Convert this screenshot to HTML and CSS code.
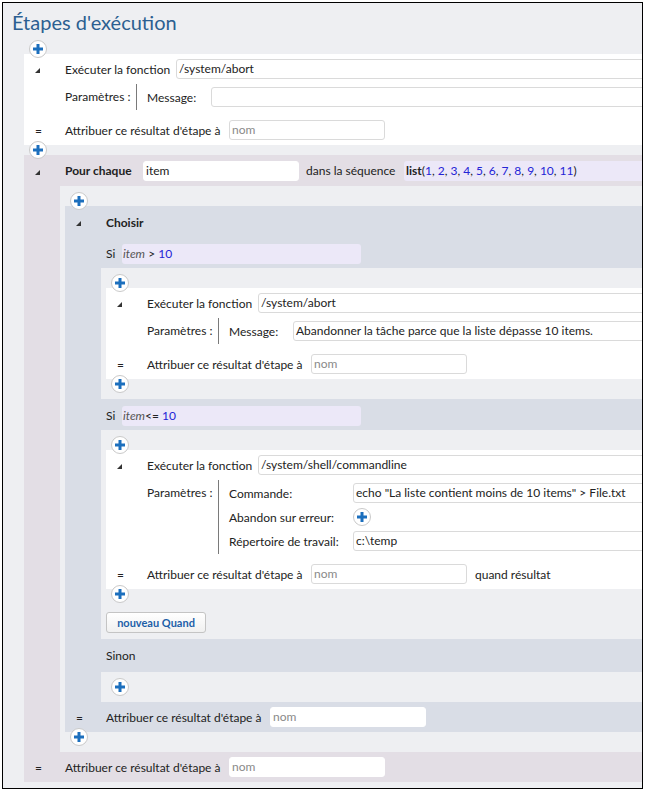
FILE: index.html
```html
<!DOCTYPE html>
<html lang="fr">
<head>
<meta charset="utf-8">
<title>Étapes d'exécution</title>
<link rel="stylesheet" href="styles.css">
</head>
<body>
<div class="frame">
  <h1 class="title">Étapes d'exécution</h1>
  <div class="seq top">
    <div class="add"><svg class="plus" viewBox="0 0 18 18" width="18" height="18"><circle cx="9" cy="9" r="8.5" fill="#fff" stroke="#c9c9c9"/><path d="M7.5 4h3v3.5h3.5v3h-3.5v3.5h-3v-3.5h-3.5v-3h3.5z" fill="#1c6fbd"/></svg></div>
    <div class="step">
      <div class="row">
        <span class="gutter"><span class="tri"></span></span>
        <span class="lbl l-exec">Exécuter la fonction</span>
        <span class="field f-long">/system/abort</span>
      </div>
      <div class="prow">
        <span class="gutter"></span>
        <span class="lbl l-par">Paramètres :</span>
        <div class="params p-msg">
          <span class="plbl">Message:</span><span class="field f-long"></span>
        </div>
      </div>
      <div class="row arow">
        <span class="gutter eq">=</span>
        <span class="lbl l-attr">Attribuer ce résultat d'étape à</span>
        <span class="field f-short ph">nom</span>
      </div>
    </div>
    <div class="add"><svg class="plus" viewBox="0 0 18 18" width="18" height="18"><circle cx="9" cy="9" r="8.5" fill="#fff" stroke="#c9c9c9"/><path d="M7.5 4h3v3.5h3.5v3h-3.5v3.5h-3v-3.5h-3.5v-3h3.5z" fill="#1c6fbd"/></svg></div>
    <div class="foreach">
      <div class="row fhead">
        <span class="gutter"><span class="tri"></span></span>
        <b class="lbl l-pour">Pour chaque</b>
        <span class="field f-short f-plain">item</span>
        <span class="lbl l-dans">dans la séquence</span>
        <span class="expr e-list"><b>list</b>(<span class="num">1</span>, <span class="num">2</span>, <span class="num">3</span>, <span class="num">4</span>, <span class="num">5</span>, <span class="num">6</span>, <span class="num">7</span>, <span class="num">8</span>, <span class="num">9</span>, <span class="num">10</span>, <span class="num">11</span>)</span>
      </div>
      <div class="fbody">
        <div class="add"><svg class="plus" viewBox="0 0 18 18" width="18" height="18"><circle cx="9" cy="9" r="8.5" fill="#fff" stroke="#c9c9c9"/><path d="M7.5 4h3v3.5h3.5v3h-3.5v3.5h-3v-3.5h-3.5v-3h3.5z" fill="#1c6fbd"/></svg></div>
        <div class="choose">
          <div class="row chead">
            <span class="gutter"><span class="tri"></span></span>
            <b class="lbl">Choisir</b>
          </div>
          <div class="cond">
            <span class="si">Si</span>
            <span class="expr e-cond"><i class="var">item</i> &gt; <span class="num">10</span></span>
          </div>
          <div class="cbody">
            <div class="add"><svg class="plus" viewBox="0 0 18 18" width="18" height="18"><circle cx="9" cy="9" r="8.5" fill="#fff" stroke="#c9c9c9"/><path d="M7.5 4h3v3.5h3.5v3h-3.5v3.5h-3v-3.5h-3.5v-3h3.5z" fill="#1c6fbd"/></svg></div>
            <div class="step">
              <div class="row">
                <span class="gutter"><span class="tri"></span></span>
                <span class="lbl l-exec">Exécuter la fonction</span>
                <span class="field f-long">/system/abort</span>
              </div>
              <div class="prow">
                <span class="gutter"></span>
                <span class="lbl l-par">Paramètres :</span>
                <div class="params p-msg">
                  <span class="plbl">Message:</span><span class="field f-long">Abandonner la tâche parce que la liste dépasse 10 items.</span>
                </div>
              </div>
              <div class="row arow">
                <span class="gutter eq">=</span>
                <span class="lbl l-attr">Attribuer ce résultat d'étape à</span>
                <span class="field f-short ph">nom</span>
              </div>
            </div>
            <div class="add"><svg class="plus" viewBox="0 0 18 18" width="18" height="18"><circle cx="9" cy="9" r="8.5" fill="#fff" stroke="#c9c9c9"/><path d="M7.5 4h3v3.5h3.5v3h-3.5v3.5h-3v-3.5h-3.5v-3h3.5z" fill="#1c6fbd"/></svg></div>
          </div>
          <div class="cond cond2">
            <span class="si">Si</span>
            <span class="expr e-cond"><i class="var">item</i>&lt;= <span class="num">10</span></span>
          </div>
          <div class="cbody cbody2">
            <div class="add"><svg class="plus" viewBox="0 0 18 18" width="18" height="18"><circle cx="9" cy="9" r="8.5" fill="#fff" stroke="#c9c9c9"/><path d="M7.5 4h3v3.5h3.5v3h-3.5v3.5h-3v-3.5h-3.5v-3h3.5z" fill="#1c6fbd"/></svg></div>
            <div class="step">
              <div class="row">
                <span class="gutter"><span class="tri"></span></span>
                <span class="lbl l-exec">Exécuter la fonction</span>
                <span class="field f-long">/system/shell/commandline</span>
              </div>
              <div class="prow">
                <span class="gutter"></span>
                <span class="lbl l-par">Paramètres :</span>
                <div class="params p-cmd">
                  <span class="plbl">Commande:</span><span class="field f-long">echo "La liste contient moins de 10 items" &gt; File.txt</span>
                  <span class="plbl">Abandon sur erreur:</span><span class="pval"><svg class="plus" viewBox="0 0 18 18" width="18" height="18"><circle cx="9" cy="9" r="8.5" fill="#fff" stroke="#c9c9c9"/><path d="M7.5 4h3v3.5h3.5v3h-3.5v3.5h-3v-3.5h-3.5v-3h3.5z" fill="#1c6fbd"/></svg></span>
                  <span class="plbl">Répertoire de travail:</span><span class="field f-long">c:\temp</span>
                </div>
              </div>
              <div class="row arow">
                <span class="gutter eq">=</span>
                <span class="lbl l-attr">Attribuer ce résultat d'étape à</span>
                <span class="field f-short ph">nom</span>
                <span class="lbl quand">quand résultat</span>
              </div>
            </div>
            <div class="add"><svg class="plus" viewBox="0 0 18 18" width="18" height="18"><circle cx="9" cy="9" r="8.5" fill="#fff" stroke="#c9c9c9"/><path d="M7.5 4h3v3.5h3.5v3h-3.5v3.5h-3v-3.5h-3.5v-3h3.5z" fill="#1c6fbd"/></svg></div>
            <div class="newwhen"><button class="btn" type="button">nouveau Quand</button></div>
          </div>
          <div class="sinon">Sinon</div>
          <div class="cbody">
            <div class="add"><svg class="plus" viewBox="0 0 18 18" width="18" height="18"><circle cx="9" cy="9" r="8.5" fill="#fff" stroke="#c9c9c9"/><path d="M7.5 4h3v3.5h3.5v3h-3.5v3.5h-3v-3.5h-3.5v-3h3.5z" fill="#1c6fbd"/></svg></div>
          </div>
          <div class="row carow">
            <span class="gutter eq">=</span>
            <span class="lbl l-attr">Attribuer ce résultat d'étape à</span>
            <span class="field f-short f-plain ph">nom</span>
          </div>
        </div>
        <div class="add"><svg class="plus" viewBox="0 0 18 18" width="18" height="18"><circle cx="9" cy="9" r="8.5" fill="#fff" stroke="#c9c9c9"/><path d="M7.5 4h3v3.5h3.5v3h-3.5v3.5h-3v-3.5h-3.5v-3h3.5z" fill="#1c6fbd"/></svg></div>
      </div>
      <div class="row farow">
        <span class="gutter eq">=</span>
        <span class="lbl l-attr">Attribuer ce résultat d'étape à</span>
        <span class="field f-short f-plain ph">nom</span>
      </div>
    </div>
  </div>
</div>
</body>
</html>
```
FILE: styles.css
```css
body {
  margin: 0;
  background: #fff;
}
.frame {
  margin: 2px 0 0 2px;
  width: 639px;
  height: 785px;
  border: 1px solid #000;
  overflow: hidden;
  background: #eeeff2;
  font-family: "Segoe UI", Lato, "Noto Sans", sans-serif;
  font-size: 12px;
  color: #222;
}
.title {
  margin: 0;
  height: 41px;
  box-sizing: border-box;
  padding: 6px 0 0 9px;
  font-size: 20px;
  font-weight: normal;
  line-height: 26px;
  color: #2c5f91;
}
.top {
  margin-left: 21px;
  width: 820px;
}
.add {
  height: 10px;
  display: flex;
  align-items: center;
  padding-left: 5px;
}
.plus {
  flex: none;
  display: block;
  position: relative;
  z-index: 1;
}
.step {
  background: #fff;
  padding: 5px 0;
}
.row {
  display: flex;
  align-items: center;
  height: 20px;
  white-space: nowrap;
}
.gutter {
  flex: none;
  width: 41px;
  box-sizing: border-box;
  padding-left: 11px;
  display: flex;
  align-items: center;
}
.tri {
  width: 0;
  height: 0;
  margin-top: 3px;
  border-left: 5px solid transparent;
  border-bottom: 5px solid #333;
}
.lbl {
  flex: none;
  white-space: nowrap;
}
.l-exec { width: 111px; }
.l-attr { width: 164px; }
.l-par {
  width: 71px;
  padding-top: 3px;
  line-height: 20px;
}
.l-pour { width: 78px; font-weight: bold; }
.l-dans { width: 98px; margin-left: 7px; }
.quand { margin-left: 8px; }
.prow {
  display: flex;
  margin-top: 5px;
}
.params {
  display: grid;
  grid-auto-rows: 20px;
  row-gap: 4px;
  align-items: center;
  border-left: 1px solid #7a7a7a;
  padding: 3px 0 3px 10px;
}
.p-msg { grid-template-columns: 64px 600px; }
.p-cmd { grid-template-columns: 124px 600px; }
.plbl { white-space: nowrap; }
.pval { display: flex; align-items: center; }
.arow { margin-top: 10px; }
.field {
  flex: none;
  display: block;
  height: 20px;
  box-sizing: border-box;
  border: 1px solid #dadada;
  border-radius: 3px;
  background: #fff;
  padding: 0 2px;
  line-height: 18px;
  white-space: nowrap;
  overflow: hidden;
}
.f-long { width: 600px; }
.f-short { width: 156px; }
.f-plain { border-color: #fff; }
.ph { color: #8a8a8a; }
.expr {
  flex: none;
  display: block;
  height: 20px;
  line-height: 20px;
  background: #ece8f8;
  border-radius: 3px;
  padding-left: 2px;
  box-sizing: border-box;
  white-space: nowrap;
}
.e-list { width: 400px; }
.e-cond { width: 239px; padding-left: 1px; }
.num { color: #2424d6; }
.var { color: #555; }
.foreach {
  background: #e3dee5;
}
.fhead { height: 31px; }
.fbody {
  margin-left: 36px;
  background: #eeeff2;
  padding: 10px 0 10px 5px;
}
.farow { height: 30px; }
.choose {
  background: #d9dde6;
}
.chead { height: 32px; }
.cond {
  display: flex;
  align-items: flex-start;
  height: 30px;
  box-sizing: border-box;
  padding: 6px 0 0 41px;
  line-height: 20px;
}
.cond2 {
  height: 31px;
  padding-top: 7px;
}
.si { width: 16px; flex: none; }
.cbody {
  margin-left: 36px;
  background: #eeeff2;
  padding: 10px 0 10px 5px;
}
.cbody2 { padding-bottom: 6px; }
.newwhen {
  margin-top: 13px;
  height: 21px;
}
.btn {
  display: block;
  width: 100px;
  height: 21px;
  padding: 0;
  border: 1px solid #c4c4c4;
  border-radius: 3px;
  background: linear-gradient(#ffffff, #f0f0f0);
  color: #1d5fa8;
  font-family: inherit;
  font-size: 11px;
  font-weight: bold;
}
.sinon {
  height: 33px;
  line-height: 33px;
  padding-left: 41px;
}
.carow { height: 30px; }
```
